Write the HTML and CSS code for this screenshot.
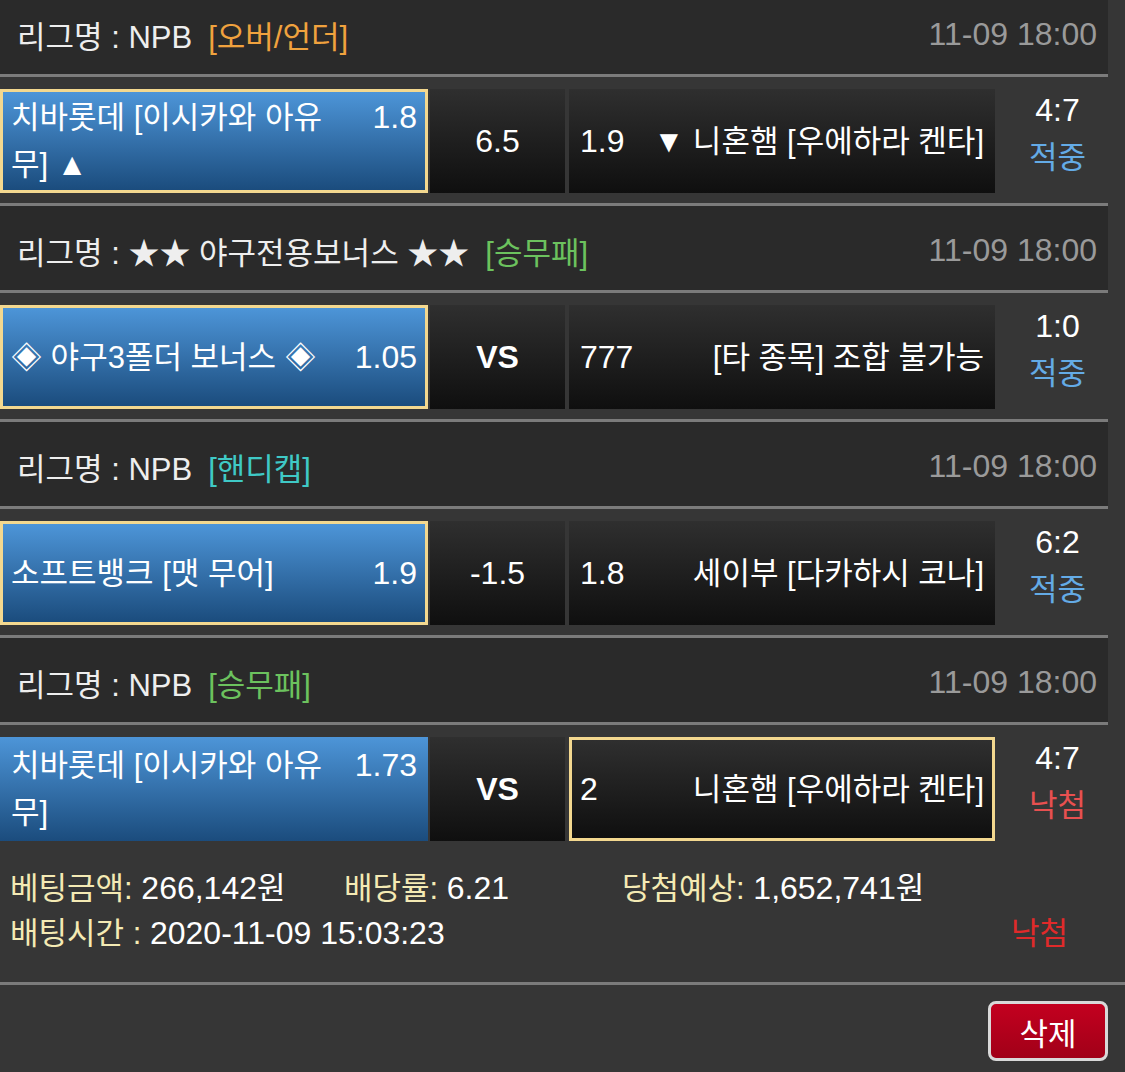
FILE: index.html
```html
<!DOCTYPE html>
<html lang="ko">
<head>
	<meta charset="UTF-8">
	<title>베팅내역</title>
	<link rel="stylesheet" href="styles.css">
</head>
<body>

	<div class="list">
		<!-- 경기 1 -->
		<div class="league">
			<span>리그명 : NPB</span><span class="tag tag-ou">[오버/언더]</span>
			<span class="league-time">11-09 18:00</span>
		</div>
		<div class="game">
			<div class="team home on"><span class="name">치바롯데 [이시카와 아유무] ▲</span><span class="odds">1.8</span></div>
			<div class="mid">6.5</div>
			<div class="team away"><span class="odds">1.9</span><span class="name">▼ 니혼햄 [우에하라 켄타]</span></div>
			<div class="result"><div class="score">4:7</div><div class="hit">적중</div></div>
		</div>

		<!-- 경기 2 -->
		<div class="league">
			<span>리그명 : ★★ 야구전용보너스 ★★</span><span class="tag tag-wdl">[승무패]</span>
			<span class="league-time">11-09 18:00</span>
		</div>
		<div class="game">
			<div class="team home on"><span class="name">◈ 야구3폴더 보너스 ◈</span><span class="odds">1.05</span></div>
			<div class="mid vs">VS</div>
			<div class="team away"><span class="odds">777</span><span class="name">[타 종목] 조합 불가능</span></div>
			<div class="result"><div class="score">1:0</div><div class="hit">적중</div></div>
		</div>

		<!-- 경기 3 -->
		<div class="league">
			<span>리그명 : NPB</span><span class="tag tag-hc">[핸디캡]</span>
			<span class="league-time">11-09 18:00</span>
		</div>
		<div class="game">
			<div class="team home on"><span class="name">소프트뱅크 [맷 무어]</span><span class="odds">1.9</span></div>
			<div class="mid">-1.5</div>
			<div class="team away"><span class="odds">1.8</span><span class="name">세이부 [다카하시 코나]</span></div>
			<div class="result"><div class="score">6:2</div><div class="hit">적중</div></div>
		</div>

		<!-- 경기 4 -->
		<div class="league">
			<span>리그명 : NPB</span><span class="tag tag-wdl">[승무패]</span>
			<span class="league-time">11-09 18:00</span>
		</div>
		<div class="game last">
			<div class="team home"><span class="name">치바롯데 [이시카와 아유무]</span><span class="odds">1.73</span></div>
			<div class="mid vs">VS</div>
			<div class="team away on"><span class="odds">2</span><span class="name">니혼햄 [우에하라 켄타]</span></div>
			<div class="result"><div class="score">4:7</div><div class="miss">낙첨</div></div>
		</div>
	</div>

	<!-- 베팅 요약 -->
	<div class="bet-info">
		<div class="bet-row">
			<span class="bet-amount"><span class="label">베팅금액:</span> <span class="num">266,142</span>원</span>
			<span class="bet-rate"><span class="label">배당률:</span> <span class="num">6.21</span></span>
			<span><span class="label">당첨예상:</span> <span class="num">1,652,741</span>원</span>
		</div>
		<div class="bet-row">
			<span><span class="label">배팅시간 :</span> <span class="num">2020-11-09 15:03:23</span></span>
			<span class="bet-state">낙첨</span>
		</div>
	</div>
	<div class="bet-foot">
		<button class="btn-del">삭제</button>
	</div>

</body>
</html>
```

FILE: styles.css
```css
/* 베팅내역 - 모바일 */
body {
	margin: 0;
	background-color: #363636;
	color: #fff;
	font-family: "Liberation Sans", "Noto Sans CJK KR", sans-serif;
	font-size: 31px;
	overflow: hidden;
}
/* 숫자는 조금 크게 */
.league-time, .odds, .mid, .score, .num {
	font-size: 32px;
}

.list {
	width: 1108px;
	margin-top: -10px;/* 스크롤 된 상태 */
}

/* 리그명 줄 */
.league {
	display: flex;
	align-items: center;
	height: 84px;
	box-sizing: border-box;
	padding: 4px 11px 0 17px;
	background-color: #2a2a2a;
	color: #eee;
}
.league-time {
	margin-left: auto;
	color: #9a9a9a;
}
.tag {
	margin-left: 16px;
}
.tag-ou { color: #f0a23e; }
.tag-wdl { color: #6cc25e; }
.tag-hc { color: #3fc9c6; }

/* 경기 줄 */
.game {
	display: flex;
	padding: 12px 0 10px;
	border-top: 3px solid #7b7b7b;
	border-bottom: 3px solid #7b7b7b;
}
.game.last {
	border-bottom: 0;
	padding-bottom: 0;
}

.team {
	display: flex;
	flex-wrap: wrap;
	align-content: center;
	align-items: baseline;
	width: 428px;
	height: 104px;
	box-sizing: border-box;
	padding: 0 11px;
	line-height: 47px;
}
.team .name {
	flex: 1 1 0;
	min-width: 0;
}
.team .odds {
	flex: none;
	margin-left: 20px;
}
.home {
	background: linear-gradient(#4d95d8, #1b4c7d);
}
.away {
	width: 426px;
	background: linear-gradient(#2f2f2f, #0f0f0f);
}
.away .odds {
	margin: 0 12px 0 0;
}
.away .name {
	text-align: right;
}
.on {
	border: 3px solid #f3d88f;
	padding: 0 8px;
}

.mid {
	width: 135px;
	height: 104px;
	margin: 0 4px 0 2px;
	line-height: 104px;
	text-align: center;
	background: linear-gradient(#2f2f2f, #0f0f0f);
}
.vs {
	font-weight: bold;
}

.result {
	flex: 1;
	margin-top: -2px;
	padding-left: 12px;
	line-height: 47px;
	text-align: center;
}
.hit { color: #64abe6; }
.miss { color: #e85050; }

/* 베팅 요약 */
.bet-info {
	padding: 25px 0 26px 10px;
	line-height: 45px;
	border-bottom: 3px solid #7b7b7b;
}
.bet-row {
	display: flex;
}
.bet-amount { width: 334px; }
.bet-rate { width: 278px; }
.label {
	color: #f4eab4;
}
.bet-state {
	margin: 0 57px 0 auto;
	color: #e02a2a;
}

.bet-foot {
	display: flex;
	justify-content: flex-end;
	padding: 16px 17px 0 0;
}
.btn-del {
	width: 120px;
	height: 60px;
	border: 3px solid #d9d9d9;
	border-radius: 8px;
	background: linear-gradient(#c3001f, #a10018);
	color: #fff;
	font-family: inherit;
	font-size: 31px;
}
```
